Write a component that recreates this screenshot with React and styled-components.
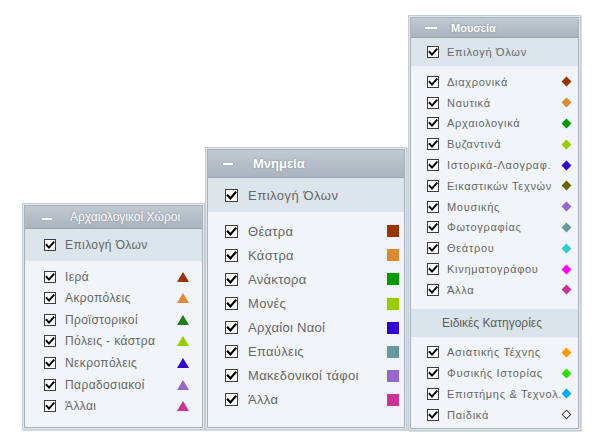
import React from 'react';
import styled, { createGlobalStyle } from 'styled-components';

const Global = createGlobalStyle`
  html, body { margin: 0; padding: 0; background: #fff; }
  body { font-family: "Liberation Sans", Arial, sans-serif; }
`;

const Stage = styled.div`
  width: 594px;
  height: 438px;
  box-sizing: border-box;
  display: flex;
  align-items: flex-end;
  padding: 0 0 8px 22px;
`;

const Panel = styled.section`
  width: ${(p) => p.$w}px;
  margin-left: ${(p) => p.$ml}px;
  margin-bottom: ${(p) => p.$mb || 0}px;
  box-sizing: border-box;
  border: 1px solid #c4ccd4;
  padding: 1px;
  background: #e3e8ed;
  box-shadow: 1px 1px 0 #d6dce2;
  flex: none;
`;

const Inner = styled.div`
  border: 1px solid #a8b2bc;
  background: #f1f5f9;
  display: flex;
  flex-direction: column;
`;

const Header = styled.div`
  height: ${(p) => p.$h}px;
  box-sizing: border-box;
  display: flex;
  align-items: center;
  padding-left: ${(p) => p.$pl}px;
  background: linear-gradient(#c2cad2, #a9b4bf);
  border-bottom: 1px solid #98a3ae;
  color: #fff;
  font-size: ${(p) => p.$fs}px;
  font-weight: ${(p) => (p.$bold ? 700 : 400)};
  text-shadow: 0 0 2px rgba(90, 102, 115, 0.6);
  white-space: nowrap;
`;

const Minus = styled.span`
  width: ${(p) => p.$w}px;
  height: 2px;
  background: #fff;
  margin-right: ${(p) => p.$gap}px;
  margin-top: ${(p) => p.$dy || 0}px;
  flex: none;
  box-shadow: 0 0 1px rgba(90, 102, 115, 0.6);
`;

const SelectAll = styled.div`
  height: ${(p) => p.$h}px;
  display: flex;
  align-items: center;
  padding-left: ${(p) => p.$pl}px;
  background: #dce4ec;
`;

const List = styled.div`
  padding: ${(p) => p.$pt}px 0 ${(p) => p.$pb}px;
  background: #f1f5f9;
`;

const Row = styled.div`
  height: ${(p) => p.$h}px;
  display: flex;
  align-items: center;
  padding-left: ${(p) => p.$pl}px;
  padding-right: ${(p) => p.$pr}px;
`;

const Label = styled.span`
  flex: 1;
  margin-left: ${(p) => p.$gap}px;
  font-size: ${(p) => p.$fs}px;
  letter-spacing: ${(p) => p.$ls}px;
  color: #666;
  white-space: nowrap;
`;

const Box = styled.span`
  width: ${(p) => p.$s}px;
  height: ${(p) => p.$s}px;
  box-sizing: border-box;
  border: 1px solid #3e3e3e;
  background: #fff;
  display: flex;
  align-items: center;
  justify-content: center;
  flex: none;
`;

const Band = styled.div`
  height: 28px;
  margin-top: 9px;
  display: flex;
  align-items: center;
  padding-left: 31px;
  background: #dce4eb;
  color: #5c5c5c;
  font-size: 12px;
  white-space: nowrap;
`;

const Square = styled.span`
  width: 12px;
  height: 12px;
  background: ${(p) => p.$c};
  flex: none;
`;

const Diamond = styled.span`
  width: 7px;
  height: 7px;
  margin-right: 1px;
  background: ${(p) => p.$c};
  border: ${(p) => (p.$outline ? '1px solid #444' : 'none')};
  box-sizing: border-box;
  transform: rotate(45deg);
  flex: none;
`;

const Check = ({ s }) => (
  <Box $s={s}>
    <svg width={s - 2} height={s - 2} viewBox="0 0 10 10">
      <path d="M1.6 5 L4 7.6 L8.6 2.4" fill="none" stroke="#000" strokeWidth="2" strokeLinecap="square" />
    </svg>
  </Box>
);

const Triangle = ({ c }) => (
  <svg width="12" height="10" viewBox="0 0 12 10" style={{ flex: 'none' }}>
    <polygon points="6,0 12,10 0,10" fill={c} />
  </svg>
);

const archaeo = [
  ['Ιερά', '#9b3300'],
  ['Ακροπόλεις', '#e08a3c'],
  ['Προϊστορικοί', '#1c7f1c'],
  ['Πόλεις - κάστρα', '#99cc00'],
  ['Νεκροπόλεις', '#3300cc'],
  ['Παραδοσιακοί', '#9966cc'],
  ['Άλλαι', '#cc3399'],
];

const monuments = [
  ['Θέατρα', '#993300'],
  ['Κάστρα', '#dd8833'],
  ['Ανάκτορα', '#009900'],
  ['Μονές', '#99cc00'],
  ['Αρχαίοι Ναοί', '#3300cc'],
  ['Επαύλεις', '#669999'],
  ['Μακεδονικοί τάφοι', '#9966cc'],
  ['Άλλα', '#cc3399'],
];

const museums = [
  ['Διαχρονικά', '#993300'],
  ['Ναυτικά', '#dd8833'],
  ['Αρχαιολογικά', '#009900'],
  ['Βυζαντινά', '#99cc00'],
  ['Ιστορικά-Λαογραφ.', '#3300cc'],
  ['Εικαστικών Τεχνών', '#666600'],
  ['Μουσικής', '#9966cc'],
  ['Φωτογραφίας', '#669999'],
  ['Θεάτρου', '#33cccc'],
  ['Κινηματογράφου', '#ff00ff'],
  ['Άλλα', '#cc3399'],
];

const special = [
  ['Ασιατικής Τέχνης', '#ff9900'],
  ['Φυσικής Ιστορίας', '#33dd00'],
  ['Επιστήμης & Τεχνολ.', '#00aaff'],
  ['Παιδικά', '#ffffff', true],
];

export default function App() {
  return (
    <>
      <Global />
      <Stage>
        <Panel $w={183} $ml={0}>
          <Inner>
            <Header $h={23} $pl={17} $fs={12}>
              <Minus $w={10} $gap={18} $dy={4} />
              Αρχαιολογικοί Χώροι
            </Header>
            <SelectAll $h={32} $pl={19}>
              <Check s={12} />
              <Label $gap={9} $fs={12} $ls={0.4}>Επιλογή Όλων</Label>
            </SelectAll>
            <List $pt={5} $pb={10}>
              {archaeo.map(([t, c]) => (
                <Row key={t} $h={21.6} $pl={19} $pr={13}>
                  <Check s={12} />
                  <Label $gap={9} $fs={12} $ls={0.4}>{t}</Label>
                  <Triangle c={c} />
                </Row>
              ))}
            </List>
          </Inner>
        </Panel>

        <Panel $w={202} $ml={0}>
          <Inner>
            <Header $h={28} $pl={15} $fs={13} $bold>
              <Minus $w={10} $gap={20} />
              Μνημεία
            </Header>
            <SelectAll $h={34} $pl={17}>
              <Check s={13} />
              <Label $gap={10} $fs={13} $ls={0.5}>Επιλογή Όλων</Label>
            </SelectAll>
            <List $pt={7} $pb={15}>
              {monuments.map(([t, c]) => (
                <Row key={t} $h={24.1} $pl={17} $pr={5}>
                  <Check s={13} />
                  <Label $gap={10} $fs={13} $ls={0.3}>{t}</Label>
                  <Square $c={c} />
                </Row>
              ))}
            </List>
          </Inner>
        </Panel>

        <Panel $w={173} $ml={1} $mb={-1}>
          <Inner>
            <Header $h={20} $pl={14} $fs={11} $bold>
              <Minus $w={12} $gap={14} />
              Μουσεία
            </Header>
            <SelectAll $h={28} $pl={16}>
              <Check s={12} />
              <Label $gap={8} $fs={11} $ls={0.7}>Επιλογή Όλων</Label>
            </SelectAll>
            <List $pt={5} $pb={0}>
              {museums.map(([t, c]) => (
                <Row key={t} $h={20.8} $pl={16} $pr={7}>
                  <Check s={12} />
                  <Label $gap={8} $fs={11} $ls={0.7}>{t}</Label>
                  <Diamond $c={c} />
                </Row>
              ))}
            </List>
            <Band>Ειδικές Κατηγορίες</Band>
            <List $pt={4.6} $pb={3}>
              {special.map(([t, c, o]) => (
                <Row key={t} $h={20.8} $pl={16} $pr={7}>
                  <Check s={12} />
                  <Label $gap={8} $fs={11} $ls={0.7}>{t}</Label>
                  <Diamond $c={c} $outline={o} />
                </Row>
              ))}
            </List>
          </Inner>
        </Panel>
      </Stage>
    </>
  );
}
